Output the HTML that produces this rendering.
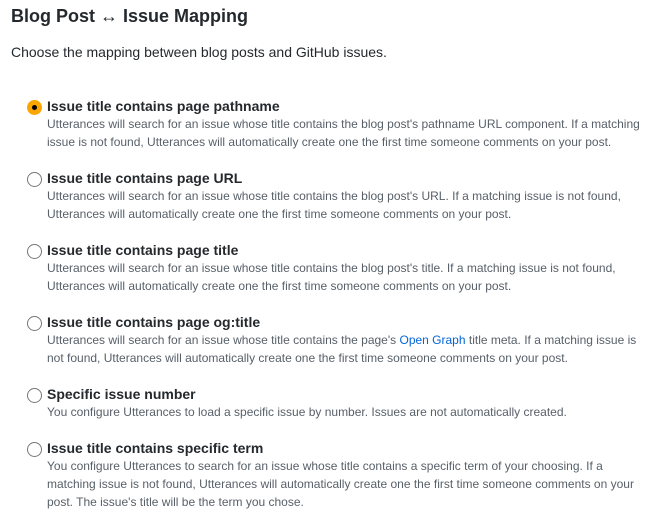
<!DOCTYPE html>
<html><head><style>
body{margin:0;width:672px;height:522px;background:#fff;font-family:"Liberation Sans",sans-serif;color:#24292e;}
h3{position:absolute;left:11px;top:5px;margin:0;font-size:18px;font-weight:bold;line-height:22px;}
p.intro{position:absolute;left:11px;top:43px;margin:0;font-size:14px;line-height:18px;}
.list{position:absolute;left:27px;top:97px;width:620px;}
.item{position:relative;padding-left:20px;margin-bottom:18px;}
.t{font-size:14px;font-weight:bold;line-height:18px;}
.d{font-size:12px;line-height:18px;color:#586069;}
.r{position:absolute;left:0;top:3px;width:13px;height:13px;border:1px solid #767676;border-radius:50%;background:#fff;}
.r.on{background:#f9a602;border-color:#f9a602;}
.r.on::after{content:"";position:absolute;left:4px;top:4px;width:5px;height:5px;border-radius:50%;background:#000;}
a{color:#0366d6;text-decoration:none;}
</style></head><body>
<h3>Blog Post ↔ Issue Mapping</h3>
<p class="intro">Choose the mapping between blog posts and GitHub issues.</p>
<div class="list">
<div class="item"><span class="r on"></span><div class="t">Issue title contains page pathname</div><div class="d">Utterances will search for an issue whose title contains the blog post's pathname URL component. If a matching issue is not found, Utterances will automatically create one the first time someone comments on your post.</div></div>
<div class="item"><span class="r"></span><div class="t">Issue title contains page URL</div><div class="d">Utterances will search for an issue whose title contains the blog post's URL. If a matching issue is not found, Utterances will automatically create one the first time someone comments on your post.</div></div>
<div class="item"><span class="r"></span><div class="t">Issue title contains page title</div><div class="d">Utterances will search for an issue whose title contains the blog post's title. If a matching issue is not found, Utterances will automatically create one the first time someone comments on your post.</div></div>
<div class="item"><span class="r"></span><div class="t">Issue title contains page og:title</div><div class="d">Utterances will search for an issue whose title contains the page's <a>Open Graph</a> title meta. If a matching issue is not found, Utterances will automatically create one the first time someone comments on your post.</div></div>
<div class="item"><span class="r"></span><div class="t">Specific issue number</div><div class="d">You configure Utterances to load a specific issue by number. Issues are not automatically created.</div></div>
<div class="item"><span class="r"></span><div class="t">Issue title contains specific term</div><div class="d">You configure Utterances to search for an issue whose title contains a specific term of your choosing. If a matching issue is not found, Utterances will automatically create one the first time someone comments on your post. The issue's title will be the term you chose.</div></div>
</div>
</body></html>
